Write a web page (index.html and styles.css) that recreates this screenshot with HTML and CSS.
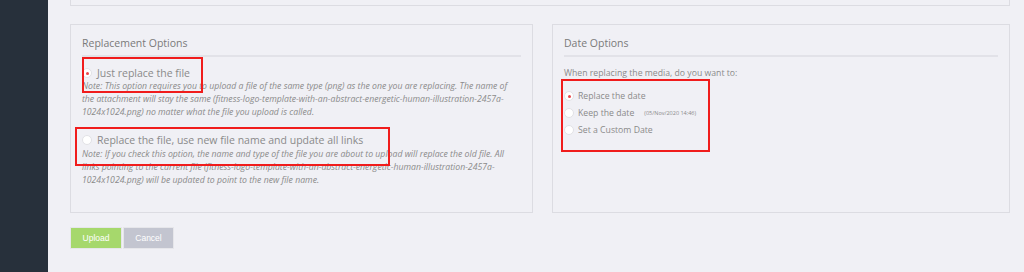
FILE: index.html
```html
<!DOCTYPE html>
<html lang="en">
<head>
  <meta charset="UTF-8" />
  <title>Replace Media</title>
  <link rel="stylesheet" href="styles.css">
</head>
<body>
  <aside class="sidebar"></aside>

  <main class="content">
    <div class="top-box"></div>

    <div class="options">
      <!-- Replacement Options -->
      <section class="box">
        <h2>Replacement Options</h2>
        <label class="option first">
          <span class="radio checked"></span>
          <span class="label-big">Just replace the file</span>
        </label>
        <p class="note">Note: This option requires you to upload a file of the same type (png) as the one you are replacing. The name of the attachment will stay the same (fitness-logo-template-with-an-abstract-energetic-human-illustration-2457a-1024x1024.png) no matter what the file you upload is called.</p>
        <label class="option second">
          <span class="radio"></span>
          <span class="label-big">Replace the file, use new file name and update all links</span>
        </label>
        <p class="note">Note: If you check this option, the name and type of the file you are about to upload will replace the old file. All links pointing to the current file (fitness-logo-template-with-an-abstract-energetic-human-illustration-2457a-1024x1024.png) will be updated to point to the new file name.</p>
        <div class="mark mark-1"></div>
        <div class="mark mark-2"></div>
      </section>

      <!-- Date Options -->
      <section class="box">
        <h2>Date Options</h2>
        <p class="intro">When replacing the media, do you want to:</p>
        <ul class="date-list">
          <li><span class="radio checked"></span>Replace the date</li>
          <li><span class="radio"></span>Keep the date <small>(05/Nov/2020 14:46)</small></li>
          <li><span class="radio"></span>Set a Custom Date</li>
        </ul>
        <div class="mark mark-3"></div>
      </section>
    </div>

    <div class="actions">
      <button class="btn upload">Upload</button>
      <button class="btn cancel">Cancel</button>
    </div>
  </main>
</body>
</html>
```

FILE: styles.css
```css
body { margin: 0; font-family: "Open Sans", Arial, sans-serif; background: #f0f0f5; color: #888; display: flex; height: 272px; overflow: hidden; }
.sidebar { width: 48px; flex: none; background: #27303b; }
.content { flex: 1; padding: 0 14px 0 22px; }
.top-box { height: 5px; border: 1px solid #dcdce2; border-top: none; }
.options { display: grid; grid-template-columns: 463px 458px; gap: 19px; margin-top: 18px; }
.box { position: relative; border: 1px solid #dcdce2; height: 187px; padding: 0 11px 0 11px; }
h2 { margin: 11px 0 0; padding-bottom: 4px; font-size: 10.5px; font-weight: 400; line-height: 15px; color: #7a7a7a; border-bottom: 2px solid #e2e2e8; }
.option { display: flex; align-items: center; gap: 5px; }
.option.first { margin-top: 9px; }
.option.second { margin-top: 14px; margin-bottom: 1px; }
.label-big { font-size: 10.5px; line-height: 14px; color: #8a8a8a; }
.radio { width: 8px; height: 8px; border-radius: 50%; background: #fff; border: 1px solid #e2e2e6; position: relative; flex: none; }
.radio.checked::after { content: ""; position: absolute; left: 3px; top: 3px; width: 3px; height: 3px; border-radius: 50%; background: #e8454a; }
.note { margin: 0; font-size: 8.7px; line-height: 13px; font-style: italic; color: #8a8a8a; }
.intro { margin: 10px 0 0; font-size: 8.7px; line-height: 13px; color: #8a8a8a; }
.date-list { list-style: none; margin: 7px 0 0; padding: 0; font-size: 8.7px; color: #8a8a8a; }
.date-list li { display: flex; align-items: center; gap: 4px; height: 17px; }
.date-list small { font-size: 5.5px; margin-left: 6px; }
.mark { position: absolute; border: 2px solid #f01c1c; }
.mark-1 { left: 11px; top: 32px; width: 117px; height: 32px; }
.mark-2 { left: 4px; top: 102px; width: 311px; height: 35px; }
.mark-3 { left: 8px; top: 54px; width: 145px; height: 69px; }
.actions { display: flex; gap: 1px; margin-top: 14px; }
.btn { border: 1px solid #e6e6ea; height: 22px; width: 52px; padding: 0; font-family: "Liberation Sans", Arial, sans-serif; font-size: 8.5px; color: #fff; }
.upload { background: #a6d86c; }
.cancel { background: #c3c5d0; width: 51px; }
```
